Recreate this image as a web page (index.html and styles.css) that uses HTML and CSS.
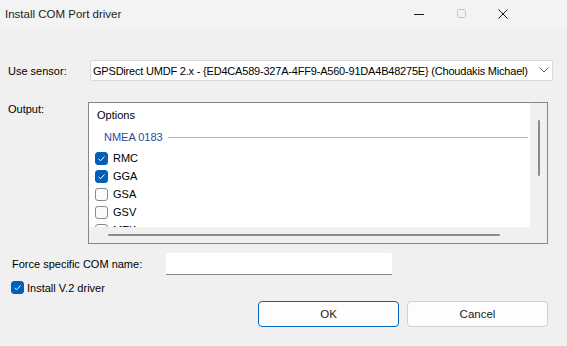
FILE: index.html
```html
<!DOCTYPE html>
<html lang="en">
<head>
    <meta charset="UTF-8">
    <title>Install COM Port driver</title>
    <link rel="stylesheet" href="styles.css">
</head>
<body>
    <div class="window">
        <div class="titlebar">
            <span class="title">Install COM Port driver</span>
            <div class="caption-buttons">
                <span class="caption-btn">
                    <svg width="12" height="12" viewBox="0 0 12 12"><path d="M1 6.5h10" stroke="#1b1b1b" stroke-width="1"/></svg>
                </span>
                <span class="caption-btn">
                    <svg width="12" height="12" viewBox="0 0 12 12"><rect x="2.5" y="1.5" width="8" height="8" rx="1" fill="none" stroke="#c4c4c4" stroke-width="1"/></svg>
                </span>
                <span class="caption-btn">
                    <svg width="12" height="12" viewBox="0 0 12 12"><path d="M1.5 1.5l9 9M10.5 1.5l-9 9" stroke="#1b1b1b" stroke-width="1"/></svg>
                </span>
            </div>
        </div>

        <div class="content">
            <div class="row sensor-row">
                <label class="field-label">Use sensor:</label>
                <div class="select">
                    <span class="select-text">GPSDirect UMDF 2.x - {ED4CA589-327A-4FF9-A560-91DA4B48275E} (Choudakis Michael)</span>
                    <svg class="chevron" width="10" height="6" viewBox="0 0 10 6"><path d="M0.5 0.5l4.5 4.5 4.5-4.5" fill="none" stroke="#5f5f5f" stroke-width="1"/></svg>
                </div>
            </div>

            <div class="row output-row">
                <label class="field-label">Output:</label>
                <div class="listbox">
                    <div class="list-body">
                        <div class="group-title">Options</div>
                        <div class="group-header">
                            <span>NMEA 0183</span>
                            <span class="group-line"></span>
                        </div>
                        <div class="check-item"><span class="box checked"><svg width="13" height="13" viewBox="0 0 13 13"><path d="M3.5 6.8l2 2 4-4.3" fill="none" stroke="#fff" stroke-width="1"/></svg></span>RMC</div>
                        <div class="check-item"><span class="box checked"><svg width="13" height="13" viewBox="0 0 13 13"><path d="M3.5 6.8l2 2 4-4.3" fill="none" stroke="#fff" stroke-width="1"/></svg></span>GGA</div>
                        <div class="check-item"><span class="box"></span>GSA</div>
                        <div class="check-item"><span class="box"></span>GSV</div>
                        <div class="check-item"><span class="box"></span>MTK</div>
                    </div>
                    <div class="vscroll"><span class="vthumb"></span></div>
                    <div class="hscroll"><span class="hthumb"></span></div>
                    <div class="corner"></div>
                </div>
            </div>

            <div class="row com-row">
                <label class="com-label">Force specific COM name:</label>
                <div class="textbox"></div>
            </div>

            <div class="row driver-row">
                <span class="box checked"><svg width="13" height="13" viewBox="0 0 13 13"><path d="M3.5 6.8l2 2 4-4.3" fill="none" stroke="#fff" stroke-width="1"/></svg></span>
                <span>Install V.2 driver</span>
            </div>

            <div class="row button-row">
                <button class="btn btn-default">OK</button>
                <button class="btn">Cancel</button>
            </div>
        </div>
    </div>
</body>
</html>
```

FILE: styles.css
```css
body {
    margin: 0;
    padding: 0;
    font-family: 'Liberation Sans', Arial, sans-serif;
    font-size: 11px;
    color: #000;
    background-color: #f0f0f0;
}

.window {
    width: 567px;
    height: 346px;
    overflow: hidden;
}

.titlebar {
    height: 28px;
    background-color: #f3f3f3;
    display: flex;
    align-items: center;
    justify-content: space-between;
}

.title {
    padding-left: 5px;
    color: #1b1b1b;
    font-size: 11.5px;
}

.caption-buttons {
    display: flex;
    margin-right: 43px;
}

.caption-btn {
    width: 42px;
    height: 28px;
    display: flex;
    align-items: center;
    justify-content: center;
}

.content {
    padding: 0 19px 0 8px;
}

.row {
    display: flex;
}

.field-label {
    width: 80px;
    flex-shrink: 0;
}

/* sensor selector */
.sensor-row {
    margin-top: 32px;
    align-items: center;
}

.select {
    width: 456px;
    height: 19px;
    margin-left: 2px;
    background-color: #fff;
    border: 1px solid #d9d9d9;
    border-radius: 2px;
    display: flex;
    align-items: center;
    justify-content: space-between;
    padding: 0 3px 0 2px;
    box-sizing: content-box;
    flex-shrink: 0;
}

.select-text {
    white-space: nowrap;
    letter-spacing: -0.2px;
    font-size: 11px;
}

.chevron {
    margin-bottom: 1px;
}

/* output list */
.output-row {
    margin-top: 21px;
}

.output-row .field-label {
    line-height: 14px;
}

.listbox {
    width: 461px;
    height: 140px;
    border: 1px solid #828790;
    display: grid;
    grid-template-columns: 1fr 17px;
    grid-template-rows: 1fr 16px;
    background-color: #f0f0f0;
}

.list-body {
    background-color: #fff;
    overflow: hidden;
    padding: 5px 0 0 6px;
}

.group-title {
    line-height: 14px;
    padding-left: 2px;
}

.group-header {
    display: flex;
    align-items: center;
    color: #2c4a9c;
    margin: 8px 0 0 9px;
    line-height: 14px;
}

.group-line {
    flex-grow: 1;
    height: 1px;
    background-color: #a3b2d6;
    margin-left: 5px;
    margin-right: 2px;
}

.check-item {
    display: flex;
    align-items: center;
    height: 18px;
}

.group-header + .check-item {
    margin-top: 5px;
}

.box {
    width: 11px;
    height: 11px;
    border: 1px solid #8a8a8a;
    border-radius: 3px;
    background-color: #fbfbfb;
    margin-right: 5px;
    flex-shrink: 0;
    position: relative;
}

.box.checked {
    border-color: #005fb8;
    background-color: #005fb8;
}

.box svg {
    position: absolute;
    left: -1px;
    top: -1px;
}

.vscroll {
    display: flex;
    justify-content: center;
    padding-top: 17px;
}

.vthumb {
    width: 2px;
    height: 56px;
    background-color: #8a8a8a;
    border-radius: 1px;
}

.hscroll {
    padding: 7px 0 0 19px;
}

.hthumb {
    display: block;
    width: 392px;
    height: 2px;
    background-color: #8a8a8a;
    border-radius: 1px;
}

/* COM name */
.com-row {
    margin-top: 9px;
    align-items: center;
}

.com-label {
    width: 154px;
    padding-left: 4px;
    flex-shrink: 0;
}

.textbox {
    width: 226px;
    height: 21px;
    background-color: #fff;
    border-bottom: 1px solid #868686;
    border-radius: 2px 2px 0 0;
}

.driver-row {
    margin-top: 6px;
    padding-left: 3px;
    align-items: center;
    height: 13px;
}

.driver-row .box {
    margin-right: 3px;
}

/* buttons */
.button-row {
    margin-top: 7px;
    justify-content: flex-end;
    gap: 8px;
}

.btn {
    width: 141px;
    height: 26px;
    font-family: inherit;
    font-size: 11.5px;
    background-color: #fdfdfd;
    border: 1px solid #d0d0d0;
    border-radius: 4px;
    color: #1b1b1b;
}

.btn-default {
    border-color: #0067c0;
}
```
